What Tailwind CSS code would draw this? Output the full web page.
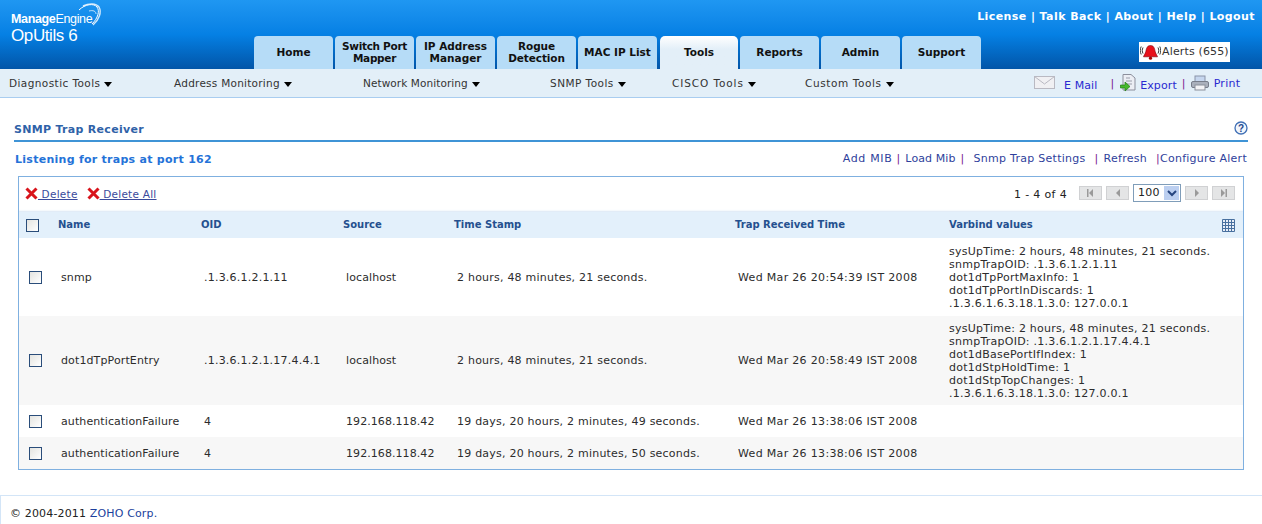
<!DOCTYPE html>
<html>
<head>
<meta charset="utf-8">
<script src="https://cdn.jsdelivr.net/npm/@tailwindcss/browser@4"></script>
</head>
<body class="bg-white font-['DejaVu_Sans',Verdana,sans-serif] text-[11px] text-[#222] h-[524px] w-[1262px] overflow-hidden flex flex-col">
<!-- header -->
<header class="h-[69px] shrink-0 flex bg-gradient-to-b from-[#1f97f2] via-[#0580e4] to-[#0255a8]">
  <div class="w-[254px] shrink-0 pl-[11px] pt-[4px] relative text-white">
    <svg class="absolute left-[65px] top-[2px]" width="38" height="26" viewBox="0 0 38 26" fill="none" stroke="#fff"><path d="M14 8C20 2 29 1 32 5C35 9 33 16 27 22" stroke-width="1"/><path d="M18 4C24 1 31 1 34 5C37 10 34 18 28 23" stroke-width="1.4" opacity=".8"/><path d="M24 9C28 8 31 9 31 12" stroke-width="1" opacity=".7"/></svg>
    <div class="mt-[8px] leading-[14px] text-[12.5px] font-['Liberation_Sans',sans-serif] tracking-[-0.35px] whitespace-nowrap"><span class="font-bold">Manage</span><span>Engine</span></div>
    <div class="leading-[19px] text-[17px] font-['Liberation_Sans',sans-serif] tracking-[-0.4px] whitespace-nowrap">OpUtils 6</div>
  </div>
  <nav class="self-end shrink-0 flex gap-[2px] font-bold text-[#111] text-[10.5px] leading-[12px] text-center">
    <a class="w-[79px] h-[33px] pb-[2px] rounded-t-[4px] bg-[#b6dcf7] flex items-center justify-center">Home</a>
    <a class="w-[79px] h-[33px] pb-[2px] rounded-t-[4px] bg-[#b6dcf7] flex items-center justify-center tracking-[-0.3px]">Switch Port<br>Mapper</a>
    <a class="w-[79px] h-[33px] pb-[2px] rounded-t-[4px] bg-[#b6dcf7] flex items-center justify-center">IP Address<br>Manager</a>
    <a class="w-[79px] h-[33px] pb-[2px] rounded-t-[4px] bg-[#b6dcf7] flex items-center justify-center tracking-[-0.1px]">Rogue<br>Detection</a>
    <a class="w-[79px] h-[33px] pb-[2px] rounded-t-[4px] bg-[#b6dcf7] flex items-center justify-center">MAC IP List</a>
    <a class="ml-[1px] w-[78px] h-[33px] pb-[2px] rounded-t-[5px] bg-gradient-to-b from-white to-[#e3eff8] to-40% flex items-center justify-center">Tools</a>
    <a class="w-[79px] h-[33px] pb-[2px] rounded-t-[4px] bg-[#b6dcf7] flex items-center justify-center">Reports</a>
    <a class="w-[79px] h-[33px] pb-[2px] rounded-t-[4px] bg-[#b6dcf7] flex items-center justify-center">Admin</a>
    <a class="w-[79px] h-[33px] pb-[2px] rounded-t-[4px] bg-[#b6dcf7] flex items-center justify-center">Support</a>
  </nav>
  <div class="flex-1 min-w-0 flex flex-col items-end pr-[7px]">
    <div class="mt-[10px] shrink-0 text-white font-bold text-[11px] tracking-[0.42px] leading-[14px] whitespace-nowrap">License&nbsp;| Talk Back&nbsp;| About&nbsp;| Help&nbsp;| Logout</div>
    <div class="mt-[18px] mr-[25px] h-[20px] w-[91px] bg-white flex items-center pl-[1px] text-[#333] gap-[1px]">
      <svg class="shrink-0" width="21" height="16" viewBox="0 0 21 16"><path d="M10.500 1.500C7 1.500 6.500 4.500 5.800 7.500C5.300 9.800 4 11 3.500 12.800H17.500C17 11 15.700 9.800 15.200 7.500C14.500 4.500 14 1.500 10.500 1.500Z" fill="#e8101a" stroke="#7a0008" stroke-width=".6"/><circle cx="10.500" cy="14.200" r="1.600" fill="#a00"/><path d="M3 3.500C2 5.500 2 7.500 3 9.500M1.200 2.500C0 5 0 8 1.200 10.500M18 3.500C19 5.500 19 7.500 18 9.500M19.800 2.500C21 5 21 8 19.800 10.500" stroke="#222" stroke-width=".9" fill="none"/></svg>
      <span class="whitespace-nowrap tracking-[0.15px]">Alerts (655)</span>
    </div>
  </div>
</header>
<!-- sub nav -->
<div class="h-[29px] shrink-0 bg-[#e3eff8] border-b border-[#a9cdf0] flex items-center pl-[9px] text-[10.5px] text-[#333] whitespace-nowrap">
  <div class="w-[165px] pt-[2px] flex items-center gap-[4px] tracking-[0.42px]">Diagnostic Tools <span class="w-0 h-0 border-x-[4px] border-x-transparent border-t-[5px] border-t-black"></span></div>
  <div class="w-[189px] pt-[2px] flex items-center gap-[4px] tracking-[0.25px]">Address Monitoring <span class="w-0 h-0 border-x-[4px] border-x-transparent border-t-[5px] border-t-black"></span></div>
  <div class="w-[187px] pt-[2px] flex items-center gap-[4px] tracking-[0.08px]">Network Monitoring <span class="w-0 h-0 border-x-[4px] border-x-transparent border-t-[5px] border-t-black"></span></div>
  <div class="w-[122px] pt-[2px] flex items-center gap-[4px] tracking-[0.46px]">SNMP Tools <span class="w-0 h-0 border-x-[4px] border-x-transparent border-t-[5px] border-t-black"></span></div>
  <div class="w-[133px] pt-[2px] flex items-center gap-[4px] tracking-[0.9px]">CISCO Tools <span class="w-0 h-0 border-x-[4px] border-x-transparent border-t-[5px] border-t-black"></span></div>
  <div class="w-[229px] pt-[2px] flex items-center gap-[4px] tracking-[0.6px]">Custom Tools <span class="w-0 h-0 border-x-[4px] border-x-transparent border-t-[5px] border-t-black"></span></div>
  <div class="flex items-center text-[#2a2ad0] text-[11px] tracking-[0.1px]">
    <svg width="21" height="14" viewBox="0 0 21 14" fill="#f0f0f3" stroke="#b9b9c2"><rect x=".5" y=".5" width="20" height="12"/><path d="M.5 .5L10.500 8L20.500 .5" fill="none"/></svg>
    <span class="ml-[9px] mt-[6px]">E Mail</span>
    <span class="ml-[13px] mt-[2px] text-[#7a1a90]">|</span>
    <svg class="ml-[6px]" width="16" height="18" viewBox="0 0 16 18"><path d="M3 .5H11L15 4V16H3Z" fill="#eceef4" stroke="#8c8f9c"/><path d="M6 4H10M6 7H12M6 10H12" stroke="#9a9daa"/><path d="M.5 11H5V8L10 12.500L5 17V14H.5Z" fill="#47b82c" stroke="#1f7a12" stroke-width=".7"/></svg>
    <span class="ml-[4px] mt-[6px]">Export</span>
    <span class="ml-[5px] mt-[2px] text-[#7a1a90]">|</span>
    <svg class="ml-[5px]" width="18" height="16" viewBox="0 0 18 16"><rect x="4" y="1" width="10" height="6" fill="#c6d6ee" stroke="#8a93a8"/><rect x=".5" y="6.500" width="17" height="6" rx="1.500" fill="#aab0bc" stroke="#777d8a"/><rect x="4" y="10" width="10" height="5" fill="#f3f3f6" stroke="#8a8f9a"/></svg>
    <span class="ml-[5px] mt-[2px] tracking-[0.3px]">Print</span>
  </div>
</div>
<!-- content -->
<main class="flex-1 px-[14px] relative">
  <div class="mt-[24px] h-[20px] border-b-2 border-[#3f94d6] flex justify-between items-start">
    <h1 class="font-bold text-[#2f62a8] text-[11px] tracking-[0.3px] leading-[16px]">SNMP Trap Receiver</h1>
    <svg class="-mt-[1px]" width="14" height="14" viewBox="0 0 14 14"><circle cx="7" cy="7" r="6" fill="#f2f6fc" stroke="#3f6fb5" stroke-width="1.300"/><text x="7" y="10.500" text-anchor="middle" font-size="10" font-weight="700" fill="#23478c" font-family="Liberation Sans">?</text></svg>
  </div>
  <div class="mt-[10px] h-[14px] flex justify-between items-center">
    <div class="ml-[1px] pt-[2px] font-bold text-[#2472d8] text-[11px] tracking-[0.27px]">Listening for traps at port 162</div>
    <div class="text-[#2f3f9c] whitespace-nowrap mr-[1px] flex tracking-[0.27px]">
      <span class="tracking-[0.65px]">Add MIB</span><span class="ml-[4px] text-[#7a1a90]">|</span><span class="ml-[5px] tracking-[0.1px]">Load Mib</span><span class="ml-[5px] text-[#7a1a90]">|</span><span class="ml-[9px]">Snmp Trap Settings</span><span class="ml-[9px] text-[#7a1a90]">|</span><span class="ml-[5px]">Refresh</span><span class="ml-[9px] text-[#7a1a90]">|</span><span>Configure Alert</span>
    </div>
  </div>
  <section class="mt-[10px] ml-[4px] w-[1226px] border border-[#7fb0e0]">
    <div class="h-[35px] flex items-center justify-between pl-[6px] pr-[8px] shadow-[inset_0_-2px_2px_-1px_#d8e6f4]">
      <div class="flex items-center text-[#3a4a9c] text-[10.5px] tracking-[0.25px]">
        <a class="flex items-end underline"><svg width="13" height="13" viewBox="0 0 13 13" class="mb-[2px]"><path d="M1.500 1.500L11.500 11.500M11.500 1.500L1.500 11.500" stroke="#d8141c" stroke-width="3"/></svg>&nbsp;Delete</a>
        <a class="ml-[9px] flex items-end underline"><svg width="13" height="13" viewBox="0 0 13 13" class="mb-[2px]"><path d="M1.500 1.500L11.500 11.500M11.500 1.500L1.500 11.500" stroke="#d8141c" stroke-width="3"/></svg>&nbsp;Delete All</a>
      </div>
      <div class="flex items-center -mt-[3px]">
        <span class="mr-[12px] mt-[5px] tracking-[0.35px]">1 - 4 of 4</span>
        <button class="w-[23px] h-[14px] bg-[#e4e5e6] border border-[#d0d1d3] flex items-center justify-center"><svg width="9" height="8" viewBox="0 0 9 8" fill="#9a9a9a"><rect x="1" width="1.500" height="8"/><path d="M7 0V8L3 4Z"/></svg></button>
        <button class="ml-[4px] w-[23px] h-[14px] bg-[#e4e5e6] border border-[#d0d1d3] flex items-center justify-center"><svg width="6" height="8" viewBox="0 0 6 8" fill="#9a9a9a"><path d="M5 0V8L1 4Z"/></svg></button>
        <div class="ml-[4px] w-[48px] h-[18px] border border-[#7f9db9] bg-white flex items-center justify-between pl-[4px] pr-[1px] tracking-[0.3px]"><span class="pt-[1px]">100</span><span class="w-[15px] h-[14px] bg-[#bccff0] flex items-center justify-center"><svg width="10" height="7" viewBox="0 0 10 7" fill="none" stroke="#27457f" stroke-width="2"><path d="M1 1L5 5L9 1"/></svg></span></div>
        <button class="ml-[4px] w-[23px] h-[14px] bg-[#e4e5e6] border border-[#d0d1d3] flex items-center justify-center"><svg width="6" height="8" viewBox="0 0 6 8" fill="#9a9a9a"><path d="M1 0V8L5 4Z"/></svg></button>
        <button class="ml-[4px] w-[23px] h-[14px] bg-[#e4e5e6] border border-[#d0d1d3] flex items-center justify-center"><svg width="9" height="8" viewBox="0 0 9 8" fill="#9a9a9a"><rect x="6.500" width="1.500" height="8"/><path d="M2 0V8L6 4Z"/></svg></button>
      </div>
    </div>
    <table class="w-full table-fixed border-collapse">
      <colgroup><col class="w-[36px]"><col class="w-[143px]"><col class="w-[142px]"><col class="w-[111px]"><col class="w-[281px]"><col class="w-[214px]"><col></colgroup>
      <thead>
        <tr class="h-[26px] bg-[#e3f0fb] text-left font-bold text-[#25508f] text-[10px]">
          <th class="pl-[7px]"><span class="block w-[13px] h-[13px] border border-[#2a4d7a] bg-gradient-to-br from-[#e4e4e0] to-white"></span></th>
          <th class="pl-[3px] pb-[2px]">Name</th><th class="pl-[3px] pb-[2px]">OID</th><th class="pl-[3px] pb-[2px]">Source</th><th class="pl-[3px] pb-[2px]">Time Stamp</th><th class="pl-[3px] pb-[2px]">Trap Received Time</th>
          <th class="pl-[3px]"><div class="flex justify-between items-center pr-[8px]"><span class="pb-[2px]">Varbind values</span><svg width="13" height="13" viewBox="0 0 13 13" fill="#e8eef8" stroke="#48709f"><path d="M.5 .5H12.500V12.500H.5ZM.5 3.500H12.500M.5 6.500H12.500M.5 9.500H12.500M3.500 .5V12.500M6.500 .5V12.500M9.500 .5V12.500"/></svg></div></th>
        </tr>
      </thead>
      <tbody class="text-[11px] leading-[13px] text-[#2c2c2c] tracking-[0.22px]">
        <tr class="h-[78px]">
          <td class="pl-[10px]"><span class="block w-[13px] h-[13px] border border-[#2a4d7a] bg-gradient-to-br from-[#e4e4e0] to-white"></span></td>
          <td class="pl-[6px] tracking-[0.12px]">snmp</td><td class="pl-[6px]">.1.3.6.1.2.1.11</td><td class="pl-[6px] tracking-[0.1px]">localhost</td><td class="pl-[6px]">2 hours, 48 minutes, 21 seconds.</td><td class="pl-[6px] tracking-[0.32px]">Wed Mar 26 20:54:39 IST 2008</td>
          <td class="pl-[3px] whitespace-nowrap tracking-[0.25px]">sysUpTime: 2 hours, 48 minutes, 21 seconds.<br>snmpTrapOID: .1.3.6.1.2.1.11<br>dot1dTpPortMaxInfo: 1<br>dot1dTpPortInDiscards: 1<br>.1.3.6.1.6.3.18.1.3.0: 127.0.0.1</td>
        </tr>
        <tr class="h-[89px] bg-[#f7f7f7]">
          <td class="pl-[10px]"><span class="block w-[13px] h-[13px] border border-[#2a4d7a] bg-gradient-to-br from-[#e4e4e0] to-white"></span></td>
          <td class="pl-[6px] tracking-[0.12px]">dot1dTpPortEntry</td><td class="pl-[6px]">.1.3.6.1.2.1.17.4.4.1</td><td class="pl-[6px] tracking-[0.1px]">localhost</td><td class="pl-[6px]">2 hours, 48 minutes, 21 seconds.</td><td class="pl-[6px] tracking-[0.32px]">Wed Mar 26 20:58:49 IST 2008</td>
          <td class="pl-[3px] whitespace-nowrap tracking-[0.25px]">sysUpTime: 2 hours, 48 minutes, 21 seconds.<br>snmpTrapOID: .1.3.6.1.2.1.17.4.4.1<br>dot1dBasePortIfIndex: 1<br>dot1dStpHoldTime: 1<br>dot1dStpTopChanges: 1<br>.1.3.6.1.6.3.18.1.3.0: 127.0.0.1</td>
        </tr>
        <tr class="h-[32px]">
          <td class="pl-[10px]"><span class="block w-[13px] h-[13px] border border-[#2a4d7a] bg-gradient-to-br from-[#e4e4e0] to-white"></span></td>
          <td class="pl-[6px] tracking-[0.1px]">authenticationFailure</td><td class="pl-[6px]">4</td><td class="pl-[6px] tracking-[0.07px]">192.168.118.42</td><td class="pl-[6px]">19 days, 20 hours, 2 minutes, 49 seconds.</td><td class="pl-[6px] tracking-[0.32px]">Wed Mar 26 13:38:06 IST 2008</td><td></td>
        </tr>
        <tr class="h-[32px] bg-[#f7f7f7]">
          <td class="pl-[10px]"><span class="block w-[13px] h-[13px] border border-[#2a4d7a] bg-gradient-to-br from-[#e4e4e0] to-white"></span></td>
          <td class="pl-[6px] tracking-[0.1px]">authenticationFailure</td><td class="pl-[6px]">4</td><td class="pl-[6px] tracking-[0.07px]">192.168.118.42</td><td class="pl-[6px]">19 days, 20 hours, 2 minutes, 50 seconds.</td><td class="pl-[6px] tracking-[0.32px]">Wed Mar 26 13:38:06 IST 2008</td><td></td>
        </tr>
      </tbody>
    </table>
  </section>
</main>
<footer class="h-[29px] shrink-0 border-t border-l border-[#d3e5f7] pl-[9px] pt-[9px] leading-[18px] text-[#222] tracking-[0.15px]">© 2004-2011 <span class="text-[#1c3f9c]">ZOHO Corp.</span></footer>
</body>
</html>
